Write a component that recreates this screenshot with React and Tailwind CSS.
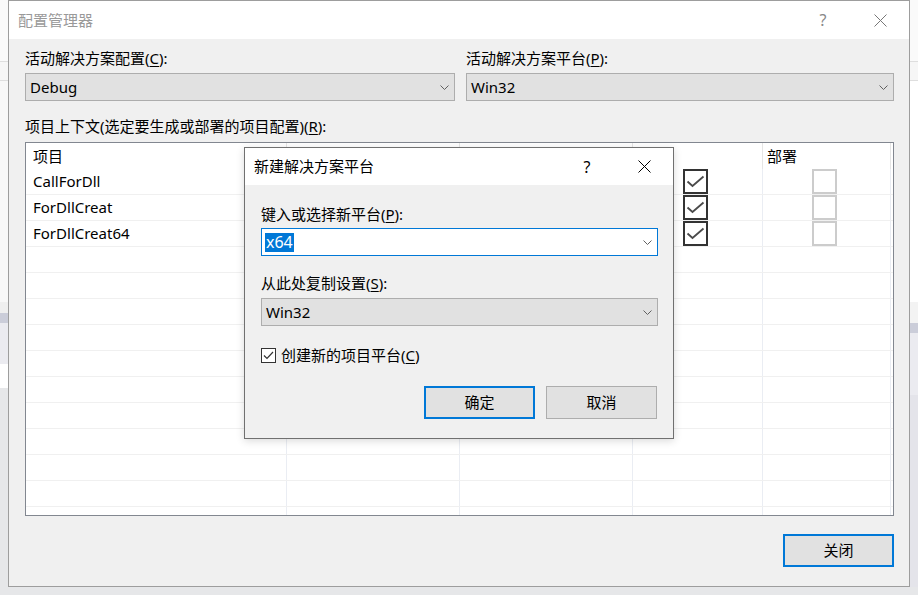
import React from 'react';

const font = "font-['Noto_Sans','Noto_Sans_CJK_SC',sans-serif]";

// small chevron used in every combo box
const Chevron = () => (
  <svg width="9" height="5" viewBox="0 0 9 5" className="shrink-0">
    <path d="M0.5 0.5 L4.5 4.5 L8.5 0.5" fill="none" stroke="#606060" strokeWidth="1" />
  </svg>
);

const CloseGlyph = ({ color = '#000' }) => (
  <svg width="13" height="13" viewBox="0 0 13 13">
    <path d="M0.5 0.5 L12.5 12.5 M12.5 0.5 L0.5 12.5" stroke={color} strokeWidth="1" />
  </svg>
);

const Mn = ({ children }) => <span className="underline underline-offset-2">{children}</span>;

const Dropdown = ({ value, className = '' }) => (
  <div className={`h-[28px] border border-[#adadad] bg-[#e1e1e1] flex items-center justify-between pl-[4px] pr-[5px] text-[15px] text-black ${className}`}>
    <span>{value}</span>
    <Chevron />
  </div>
);

const BigCheck = ({ on }) =>
  on ? (
    <div className="w-[25px] h-[25px] border-2 border-[#333] bg-white">
      <svg width="21" height="21" viewBox="0 0 21 21">
        <path d="M2.5 10.5 L7.5 15 L18.5 5.5" fill="none" stroke="#4a4a4a" strokeWidth="1.8" />
      </svg>
    </div>
  ) : (
    <div className="w-[25px] h-[25px] border-2 border-[#cccccc] bg-white" />
  );

const projects = ['CallForDll', 'ForDllCreat', 'ForDllCreat64'];
const cols = ['w-[261px] pl-[7px]', 'w-[173px] pl-[6px]', 'w-[173px] pl-[6px]', 'w-[130px] pl-[6px]', 'w-[128px] pl-[4px]'];
// columns 2-4 have headers hidden behind the dialog
const headers = ['项目', '', '', '', '部署'];

const ProjectGrid = () => {
  const rows = Array.from({ length: 14 }, (_, i) => projects[i] || null);
  return (
    <div className="mt-[6px] h-[374px] w-[869px] border border-[#828790] bg-white overflow-hidden text-[15px] text-black">
      <div className="flex h-[26px]">
        {headers.map((h, i) => (
          <div key={i} className={`${cols[i]} h-full border-r border-[#e5e5e5] flex items-center`}>
            {h}
          </div>
        ))}
      </div>
      {rows.map((name, r) => (
        <div key={r} className="flex h-[26px] border-b border-[#f0f0f0]">
          <div className={`${cols[0]} h-full border-r border-[#eaedf3] flex items-center`}>{name}</div>
          <div className={`${cols[1]} h-full border-r border-[#eaedf3]`} />
          <div className={`${cols[2]} h-full border-r border-[#eaedf3]`} />
          <div className={`${cols[3]} h-full border-r border-[#eaedf3] !pl-[50px]`}>
            {name && <BigCheck on />}
          </div>
          <div className={`${cols[4]} h-full border-r border-[#eaedf3] !pl-[49px]`}>
            {name && <BigCheck on={false} />}
          </div>
        </div>
      ))}
    </div>
  );
};

const NewPlatformDialog = () => (
  <div className="absolute left-[244px] top-[147px] w-[430px] h-[292px] border border-[#707070] bg-[#f0f0f0] flex flex-col shadow-[0_2px_8px_rgba(0,0,0,0.15)]">
    <div className="h-[37px] bg-white flex items-center pl-[9px] pr-[6px] text-[15px] text-black">
      <span className="flex-1">新建解决方案平台</span>
      <span className="w-[46px] text-center text-[16px]">?</span>
      <span className="w-[46px] ml-[11px] flex justify-center">
        <CloseGlyph />
      </span>
    </div>
    <div className="flex flex-col pl-[16px] pr-[15px] pt-[19px] text-[15px] text-black">
      <div className="h-[20px] leading-[20px]">
        键入或选择新平台(<Mn>P</Mn>):
      </div>
      <div className="mt-[4px] h-[28px] border border-[#0078d7] bg-white flex items-center justify-between pl-[3px] pr-[5px]">
        <span className="bg-[#0078d7] text-white h-[19px] leading-[19px] px-[1px] text-[16px]">x64</span>
        <Chevron />
      </div>
      <div className="mt-[17px] h-[20px] leading-[20px]">
        从此处复制设置(<Mn>S</Mn>):
      </div>
      <Dropdown value="Win32" className="mt-[5px]" />
      <div className="mt-[19px] h-[20px] flex items-center gap-[5px]">
        <div className="w-[15px] h-[15px] border border-[#333] bg-white">
          <svg width="13" height="13" viewBox="0 0 13 13">
            <path d="M2 6.5 L5 9.5 L11 3" fill="none" stroke="#333" strokeWidth="1.2" />
          </svg>
        </div>
        <span>
          创建新的项目平台(<Mn>C</Mn>)
        </span>
      </div>
      <div className="mt-[21px] flex justify-end gap-[11px] pr-[1px]">
        <button className="w-[111px] h-[33px] border-2 border-[#0078d7] bg-[#e1e1e1] text-[15px]">确定</button>
        <button className="w-[111px] h-[33px] border border-[#adadad] bg-[#e1e1e1] text-[15px]">取消</button>
      </div>
    </div>
  </div>
);

// slivers of whatever window sits behind the dialog
const LeftSliver = () => (
  <div className="w-[8px] flex flex-col">
    <div className="h-[61px] bg-[#fafafa]" />
    <div className="h-[1px] bg-[#dedede]" />
    <div className="h-[18px] bg-[#f6f6f6]" />
    <div className="h-[1px] bg-[#dedede]" />
    <div className="h-[221px] bg-[#f8f8f8]" />
    <div className="h-[11px] bg-[#efefef]" />
    <div className="h-[10px] bg-[#cbcdd9]" />
    <div className="h-[41px] bg-[#ebebf0]" />
    <div className="h-[24px] bg-white" />
    <div className="flex-1 bg-[#e6e7e9]" />
  </div>
);

const RightSliver = () => (
  <div className="w-[8px] flex flex-col">
    <div className="h-[61px] bg-[#fafafa]" />
    <div className="h-[1px] bg-[#dedede]" />
    <div className="h-[18px] bg-[#f6f6f6]" />
    <div className="h-[1px] bg-[#dedede]" />
    <div className="h-[221px] bg-white" />
    <div className="h-[21px] bg-[#f3f3f3]" />
    <div className="h-[10px] bg-[#cbcdd9]" />
    <div className="h-[62px] bg-[#ebebf0]" />
    <div className="flex-1 bg-[#e4e4ea]" />
  </div>
);

export default function App() {
  return (
    <div className={`w-[918px] h-[595px] bg-[#e6e7e9] flex flex-col overflow-hidden ${font}`}>
      <div className="flex h-[587px]">
        <LeftSliver />
        <div className="relative w-[902px] h-[587px] border border-[#9d9d9d] flex flex-col">
          <div className="h-[38px] bg-white flex items-center pl-[9px] text-[15px] text-[#999]">
            <span className="flex-1">配置管理器</span>
            <span className="w-[46px] text-center text-[16px] text-[#888]">?</span>
            <span className="w-[46px] ml-[11px] mr-[6px] flex justify-center">
              <CloseGlyph color="#777" />
            </span>
          </div>

          <div className="flex-1 bg-[#f0f0f0] pl-[16px] pr-[15px] pt-[9px] flex flex-col text-[15px] text-black">
            <div className="flex gap-[11px]">
              <div className="w-[430px]">
                <div className="h-[20px] leading-[20px]">
                  活动解决方案配置(<Mn>C</Mn>):
                </div>
                <Dropdown value="Debug" className="mt-[5px]" />
              </div>
              <div className="flex-1">
                <div className="h-[20px] leading-[20px]">
                  活动解决方案平台(<Mn>P</Mn>):
                </div>
                <Dropdown value="Win32" className="mt-[5px]" />
              </div>
            </div>

            <div className="mt-[15px] h-[20px] leading-[20px]">
              项目上下文(选定要生成或部署的项目配置)(<Mn>R</Mn>):
            </div>
            <ProjectGrid />

            <div className="mt-[18px] flex justify-end">
              <button className="w-[111px] h-[33px] border-2 border-[#0078d7] bg-[#e1e1e1] text-[15px]">关闭</button>
            </div>
          </div>

          <div className="absolute inset-0 pointer-events-none">
            <div className="relative -left-[9px] -top-[1px]">
              <NewPlatformDialog />
            </div>
          </div>
        </div>
        <RightSliver />
      </div>
    </div>
  );
}
